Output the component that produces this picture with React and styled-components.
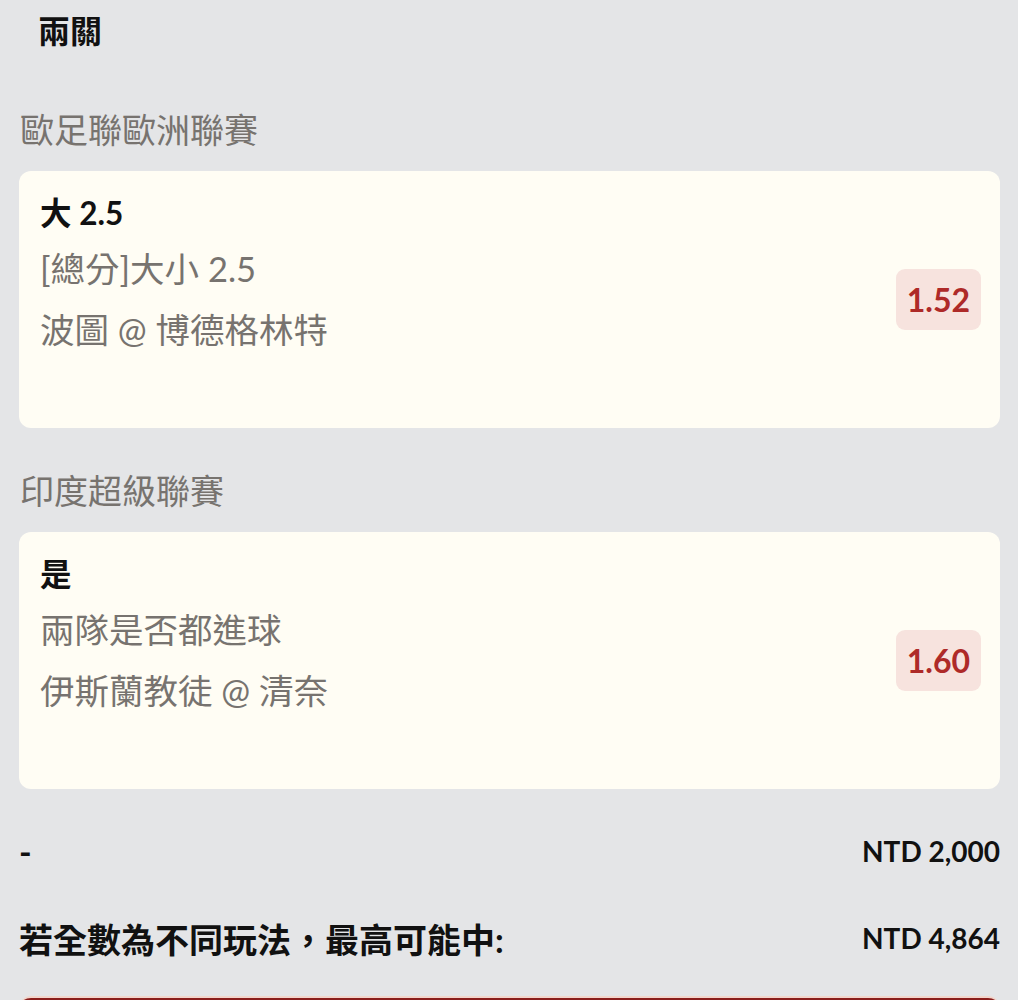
import React from 'react';
import styled, { createGlobalStyle } from 'styled-components';

const GlobalStyle = createGlobalStyle`
  html, body {
    margin: 0;
    padding: 0;
    background: #e4e5e7;
  }
  body {
    font-family: Lato, "Noto Sans CJK TC", sans-serif;
    overflow: hidden;
  }
`;

const Page = styled.div`
  display: flex;
  flex-direction: column;
  width: 1018px;
  height: 1000px;
  box-sizing: border-box;
  padding: 9px 18px 0 19px;
  overflow: hidden;
`;

const Title = styled.h1`
  margin: 0 0 14px 0;
  padding-left: 19px;
  font-size: 32px;
  line-height: 44px;
  font-weight: 700;
  color: #111;
`;

const League = styled.div`
  margin: 39px 0 17px 1px;
  font-size: 34px;
  line-height: 48px;
  color: #77736f;
`;

const Card = styled.div`
  display: flex;
  align-items: center;
  justify-content: space-between;
  flex-shrink: 0;
  box-sizing: border-box;
  height: 257px;
  padding: 22px 19px 0 21px;
  background: #fffdf4;
  border-radius: 12px;
`;

const Info = styled.div`
  align-self: flex-start;
  display: flex;
  flex-direction: column;
`;

const Pick = styled.div`
  font-size: 31.5px;
  line-height: 40px;
  font-weight: 700;
  color: #111;
`;

const Detail = styled.div`
  margin-top: ${p => p.$gap}px;
  font-size: 34.5px;
  line-height: 56px;
  color: #77736f;
`;

const Odds = styled.div`
  margin-top: -22px;
  padding: 0 11px;
  height: 61px;
  line-height: 61px;
  border-radius: 9px;
  background: #f7e3de;
  color: #ae2a28;
  font-size: 32px;
  font-weight: 700;
`;

const SummaryRow = styled.div`
  display: flex;
  justify-content: space-between;
  align-items: center;
  flex-shrink: 0;
  margin-top: ${p => p.$gap}px;
  height: 44px;
  color: #111;
  font-weight: 700;
`;

const Label = styled.span`
  font-size: 34px;
`;

const Amount = styled.span`
  font-size: 28px;
`;

const SubmitButton = styled.button`
  display: block;
  flex-shrink: 0;
  width: 100%;
  height: 60px;
  margin-top: 36px;
  border: none;
  border-top: 2px solid #f2d6cc;
  border-radius: 12px;
  background: #8a1e1c;
`;

const bets = [
  {
    league: '歐足聯歐洲聯賽',
    pick: '大 2.5',
    market: '[總分]大小 2.5',
    match: '波圖 @ 博德格林特',
    odds: '1.52',
  },
  {
    league: '印度超級聯賽',
    pick: '是',
    market: '兩隊是否都進球',
    match: '伊斯蘭教徒 @ 清奈',
    odds: '1.60',
  },
];

export default function App() {
  return (
    <>
      <GlobalStyle />
      <Page>
        <Title>兩關</Title>
        {bets.map(b => (
          <React.Fragment key={b.league}>
            <League>{b.league}</League>
            <Card>
              <Info>
                <Pick>{b.pick}</Pick>
                <Detail $gap={8}>{b.market}</Detail>
                <Detail $gap={5}>{b.match}</Detail>
              </Info>
              <Odds>{b.odds}</Odds>
            </Card>
          </React.Fragment>
        ))}
        <SummaryRow $gap={40}>
          <Label>-</Label>
          <Amount>NTD 2,000</Amount>
        </SummaryRow>
        <SummaryRow $gap={43}>
          <Label>若全數為不同玩法，最高可能中:</Label>
          <Amount>NTD 4,864</Amount>
        </SummaryRow>
        <SubmitButton />
      </Page>
    </>
  );
}
